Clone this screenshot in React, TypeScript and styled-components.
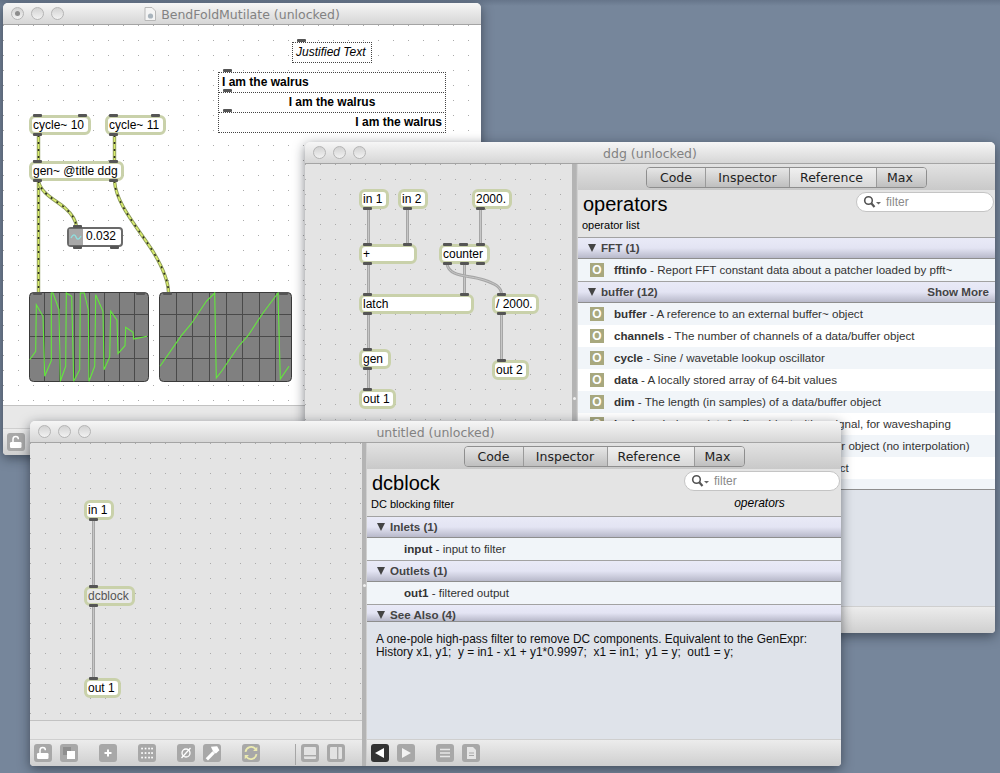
import React from 'react';
import styled, { createGlobalStyle } from 'styled-components';

type Port = number;
type PatchObject = {
  x: number;
  y: number;
  w: number;
  label: string;
  inlets?: Port[];
  outlets?: Port[];
  ghost?: boolean;
};

const GlobalStyle = createGlobalStyle`
  html, body {
    margin: 0;
    padding: 0;
    width: 1000px;
    height: 773px;
    overflow: hidden;
    background: #76869b;
  }
`;

const ARIAL = `"Liberation Sans", Arial, sans-serif`;
const LUCIDA = `"DejaVu Sans", Verdana, sans-serif`;

const Desktop = styled.div`
  position: relative;
  width: 1000px;
  height: 773px;
  overflow: hidden;
  background: linear-gradient(180deg, #66758a 0, #76869b 6px, #76869b 100%);
  font-family: ${ARIAL};
`;

const Window = styled.section<{ $x: number; $y: number; $w: number; $h: number }>`
  position: absolute;
  left: ${(p) => p.$x}px;
  top: ${(p) => p.$y}px;
  width: ${(p) => p.$w}px;
  height: ${(p) => p.$h}px;
  display: flex;
  flex-direction: column;
  border-radius: 5px 5px 4px 4px;
  overflow: hidden;
  box-shadow: 0 3px 12px rgba(20, 25, 35, 0.55);
  background: #e8e8e8;
`;

const TitleBar = styled.header`
  position: relative;
  flex: none;
  height: 22px;
  box-sizing: border-box;
  display: flex;
  align-items: center;
  justify-content: center;
  gap: 5px;
  background: linear-gradient(180deg, #f6f6f6, #d6d6d6);
  border-bottom: 1px solid #a4a4a4;
`;

const TitleText = styled.span`
  padding-top: 1px;
  font: 12.5px ${LUCIDA};
  color: #828282;
`;

const Lights = styled.div`
  position: absolute;
  left: 8px;
  top: 4px;
  display: flex;
  gap: 7px;
`;

const Light = styled.i<{ $dot?: boolean }>`
  position: relative;
  display: block;
  width: 13px;
  height: 13px;
  box-sizing: border-box;
  border-radius: 50%;
  border: 1px solid #b4b4b4;
  background: linear-gradient(180deg, #d2d2d2, #f2f2f2);
  &::after {
    content: '';
    display: ${(p) => (p.$dot ? 'block' : 'none')};
    position: absolute;
    left: 3px;
    top: 3px;
    width: 5px;
    height: 5px;
    border-radius: 50%;
    background: #8c8c8c;
  }
`;

const Body = styled.div`
  flex: 1;
  min-height: 0;
  display: flex;
`;

const PatcherColumn = styled.div<{ $w?: number }>`
  flex: ${(p) => (p.$w ? `none` : 1)};
  width: ${(p) => (p.$w ? `${p.$w}px` : 'auto')};
  display: flex;
  flex-direction: column;
  min-height: 0;
`;

const Canvas = styled.div<{ $bg: string }>`
  position: relative;
  flex: 1;
  min-height: 0;
  overflow: hidden;
  background-color: ${(p) => p.$bg};
  background-image: radial-gradient(circle at 0.5px 0.5px, #aaa 0.45px, transparent 0.75px);
  background-size: 15px 15px;
`;

const CordLayer = styled.svg`
  position: absolute;
  left: 0;
  top: 0;
  width: 100%;
  height: 100%;
`;

const ObjectBox = styled.div<{ $x: number; $y: number; $w: number; $ghost?: boolean }>`
  position: absolute;
  left: ${(p) => p.$x}px;
  top: ${(p) => p.$y}px;
  width: ${(p) => p.$w}px;
  height: 20px;
  box-sizing: border-box;
  padding-left: 1px;
  border: 3px solid #c9d1aa;
  border-radius: 6px;
  background: ${(p) => (p.$ghost ? '#e9e9e9' : '#fff')};
  color: ${(p) => (p.$ghost ? '#555' : '#000')};
  font: 12px/14px ${ARIAL};
  white-space: nowrap;
`;

const PortBar = styled.b<{ $x: number; $bottom?: boolean }>`
  position: absolute;
  left: ${(p) => p.$x - 3}px;
  ${(p) => (p.$bottom ? 'bottom: -4px;' : 'top: -4px;')}
  width: 9px;
  height: 3px;
  border-radius: 1px;
  background: #555;
`;

const NumberBox = styled.div<{ $x: number; $y: number }>`
  position: absolute;
  left: ${(p) => p.$x}px;
  top: ${(p) => p.$y}px;
  width: 56px;
  height: 20px;
  box-sizing: border-box;
  display: flex;
  border: 2px solid #6a6a6a;
  border-radius: 4px;
  background: #fff;
  font: 12px/15px ${ARIAL};
`;

const NumberArrow = styled.span`
  flex: none;
  width: 14px;
  margin-right: 3px;
  background: #a8a8a8;
  color: #8fdede;
  display: flex;
  align-items: center;
  justify-content: center;
`;

const Comment = styled.div<{ $x: number; $y: number; $w: number; $align?: string; $italic?: boolean }>`
  position: absolute;
  left: ${(p) => p.$x}px;
  top: ${(p) => p.$y}px;
  width: ${(p) => p.$w}px;
  height: 21px;
  box-sizing: border-box;
  padding: 0 3px;
  border: 1px dotted #444;
  font: ${(p) => (p.$italic ? 'italic 12px/19px' : 'bold 12px/19px')} ${ARIAL};
  text-align: ${(p) => p.$align || 'left'};
  background: #fff;
  color: #000;
`;

const ScopeFrame = styled.svg<{ $x: number; $y: number; $w: number }>`
  position: absolute;
  left: ${(p) => p.$x}px;
  top: ${(p) => p.$y}px;
  width: ${(p) => p.$w}px;
  height: 90px;
`;

const Strip = styled.div<{ $h: number }>`
  flex: none;
  height: ${(p) => p.$h}px;
  box-sizing: border-box;
  border-top: 1px solid #c2c2c2;
  background: #e8e8e8;
`;

const Toolbar = styled.div`
  flex: none;
  height: 27px;
  box-sizing: border-box;
  padding: 4px 0 0 4px;
  display: flex;
  align-items: flex-start;
  border-top: 1px solid #cfcfcf;
  background: linear-gradient(180deg, #ececec, #cfcfcf);
`;

const ToolButton = styled.span<{ $gap?: number; $dark?: boolean }>`
  flex: none;
  width: 18px;
  height: 18px;
  margin-left: ${(p) => p.$gap ?? 0}px;
  border-radius: 3px;
  background: ${(p) => (p.$dark ? '#333' : '#a8a8a8')};
  display: flex;
  align-items: center;
  justify-content: center;
`;

const ToolDivider = styled.i<{ $gap: number }>`
  flex: none;
  width: 1px;
  height: 21px;
  margin: 0 5px 0 ${(p) => p.$gap}px;
  background: #a6a6a6;
`;

const Splitter = styled.div<{ $w: number; $dot: number }>`
  position: relative;
  flex: none;
  width: ${(p) => p.$w}px;
  background: linear-gradient(90deg, #b4b4b4 0, #b4b4b4 70%, #dcdcdc 100%);
  &::after {
    content: '';
    position: absolute;
    left: 1px;
    top: ${(p) => p.$dot}px;
    width: 3px;
    height: 3px;
    border-radius: 50%;
    background: #f0f0f0;
  }
`;

const Sidebar = styled.div`
  flex: 1;
  min-width: 0;
  display: flex;
  flex-direction: column;
`;

const TabBar = styled.nav`
  flex: none;
  height: 26px;
  padding-top: 3px;
  box-sizing: border-box;
  display: flex;
  justify-content: center;
  align-items: flex-start;
  background: linear-gradient(180deg, #e2e2e2, #c9c9c9);
`;

const TabGroup = styled.div`
  display: flex;
  height: 21px;
  box-sizing: border-box;
  border: 1px solid #8e8e8e;
  border-radius: 4px;
  overflow: hidden;
`;

const Tab = styled.span<{ $w: number; $active?: boolean; $nudge?: number }>`
  box-sizing: border-box;
  width: ${(p) => p.$w}px;
  padding-right: ${(p) => p.$nudge ?? 0}px;
  text-align: center;
  font: 12.5px/19px ${LUCIDA};
  color: #222;
  border-left: 1px solid #9a9a9a;
  background: ${(p) =>
    p.$active ? 'linear-gradient(180deg, #f0f0f0, #d8d8d8)' : 'linear-gradient(180deg, #e6e6e6, #bfbfbf)'};
  &:first-child {
    border-left: 0;
  }
`;

const DocHeader = styled.div`
  flex: none;
  height: 47px;
  box-sizing: border-box;
  background: #e4e4e4;
  color: #000;
`;

const HeadRow = styled.div`
  display: flex;
  justify-content: space-between;
  align-items: flex-start;
  padding: 2px 1px 0 5px;
`;

const DocTitle = styled.h1`
  margin: 0;
  font: normal 20px/24px ${ARIAL};
`;

const FilterField = styled.div<{ $w: number }>`
  width: ${(p) => p.$w}px;
  height: 20px;
  box-sizing: border-box;
  display: flex;
  align-items: center;
  gap: 4px;
  padding-left: 6px;
  border: 1px solid #c4c4c4;
  border-radius: 10px;
  background: #fff;
  font: 12px ${ARIAL};
  color: #8a8a8a;
`;

const SubRow = styled.div`
  display: flex;
  padding: 2px 0 0 4px;
  font-size: 11px;
  line-height: 14px;
`;

const Category = styled.span<{ $x: number }>`
  margin-left: ${(p) => p.$x}px;
  font: italic 12px/12px ${ARIAL};
`;

const Section = styled.div<{ $h?: number }>`
  flex: none;
  height: ${(p) => p.$h ?? 22}px;
  box-sizing: border-box;
  display: flex;
  align-items: flex-start;
  padding: 3px 6px 0 10px;
  overflow: hidden;
  border-top: 1px solid #a2a2a2;
  border-bottom: 1px solid #8e8e8e;
  background: linear-gradient(180deg, #e9eaf7 0, #e3e4f3 50%, #b8b9ca 100%);
  color: #444;
  font: bold 11.6px/14px ${ARIAL};
`;

const Caret = styled.span`
  width: 0;
  height: 0;
  margin: 3px 5px 0 0;
  border-left: 4.5px solid transparent;
  border-right: 4.5px solid transparent;
  border-top: 8px solid #444;
`;

const ShowMore = styled.span`
  margin-left: auto;
`;

const Row = styled.div<{ $odd?: boolean; $h?: number; $indent?: boolean }>`
  flex: none;
  height: ${(p) => p.$h ?? 22}px;
  box-sizing: border-box;
  display: flex;
  align-items: center;
  overflow: hidden;
  padding-left: ${(p) => (p.$indent ? 37 : 12)}px;
  background: ${(p) => (p.$odd ? '#fff' : '#f1f5f9')};
  color: #333;
  font: 11.6px/14px ${ARIAL};
  white-space: nowrap;
  strong {
    color: #333;
  }
`;

const OpBadge = styled.span`
  flex: none;
  width: 14px;
  height: 14px;
  margin-right: 10px;
  background: #a8a87e;
  color: #fff;
  text-align: center;
  font: bold 12px/14px ${ARIAL};
`;

const ListEnd = styled.div`
  flex: none;
  height: 1px;
  background: #8e8e8e;
`;

const Blank = styled.div`
  flex: 1;
  min-height: 0;
  background: #dfe3ea;
`;

const Description = styled.p`
  flex: 1;
  min-height: 0;
  margin: 0;
  padding: 11px 8px 0 9px;
  background: #dfe3ea;
  color: #111;
  font: 11.9px/13px ${ARIAL};
`;

const DocIcon = styled.svg`
  flex: none;
  width: 12px;
  height: 14px;
`;

/* patcher contents, all given in page coordinates */

const bendObjects: PatchObject[] = [
  { x: 29, y: 115, w: 62, label: 'cycle~ 10', inlets: [4, 49], outlets: [4] },
  { x: 105, y: 115, w: 61, label: 'cycle~ 11', inlets: [4, 46], outlets: [4] },
  { x: 29, y: 161, w: 95, label: 'gen~ @title ddg', inlets: [4, 80], outlets: [4, 80] },
];

const ddgObjects: PatchObject[] = [
  { x: 359, y: 189, w: 30, label: 'in 1', outlets: [4] },
  { x: 398, y: 189, w: 30, label: 'in 2', outlets: [5] },
  { x: 472, y: 189, w: 40, label: '2000.', outlets: [4] },
  { x: 359, y: 244, w: 58, label: '+', inlets: [4, 44], outlets: [4] },
  { x: 439, y: 244, w: 51, label: 'counter', inlets: [4, 20, 37], outlets: [4, 21, 37] },
  { x: 359, y: 294, w: 115, label: 'latch', inlets: [4, 101], outlets: [4] },
  { x: 492, y: 294, w: 47, label: '/ 2000.', inlets: [5], outlets: [5] },
  { x: 359, y: 349, w: 32, label: 'gen', inlets: [4], outlets: [4] },
  { x: 492, y: 360, w: 37, label: 'out 2', inlets: [5] },
  { x: 359, y: 389, w: 37, label: 'out 1', inlets: [4] },
];

const untitledObjects: PatchObject[] = [
  { x: 84, y: 500, w: 30, label: 'in 1', outlets: [5] },
  { x: 84, y: 586, w: 51, label: 'dcblock', inlets: [5], outlets: [5], ghost: true },
  { x: 84, y: 678, w: 37, label: 'out 1', inlets: [5] },
];

const bendCords = [
  'M38.5 135V161',
  'M114.5 135V161',
  'M38.5 181V292',
  'M38.5 181C41 194 56 200 65 208C73 215 76 221 76.5 227',
  'M114.5 181C116 204 138 228 152 250C162 266 168 280 168.5 292',
];

const ddgCords = [
  'M368.5 208V244',
  'M407.5 208V244',
  'M480.5 208V244',
  'M368.5 264V294',
  'M464.5 264V294',
  'M447 264C449 277 468 275 484 280C496 284 501 287 501.5 294',
  'M368.5 314V349',
  'M501.5 314V360',
  'M368.5 369V389',
];

const untitledCords = ['M93.5 520V586', 'M93.5 606V678'];

/* traced from the reference at 3x, so divided down when drawn */
const scopeA = [
  [90, 330], [108, 305], [110, 165], [130, 200], [135, 380], [155, 333], [155, 130], [160, 130],
  [178, 180], [182, 395], [198, 350], [200, 130], [216, 140], [222, 395], [240, 360], [242, 130],
  [254, 130], [266, 180], [268, 395], [285, 350], [288, 135], [310, 185], [313, 360], [330, 322],
  [333, 185], [352, 212], [355, 312], [376, 288], [378, 233], [400, 248], [402, 268], [442, 260],
];
const scopeB = [
  [481, 350], [545, 258], [575, 222], [620, 155], [645, 130], [650, 385], [668, 362], [715, 292],
  [745, 258], [790, 190], [835, 130], [842, 388], [868, 350],
];

const toPoints = (pts: number[][], left: number) =>
  pts.map(([x, y]) => `${((x - left) / 3).toFixed(1)},${((y - 127) / 3).toFixed(1)}`).join(' ');

const Scope: React.FC<{ x: number; y: number; w: number; points: string }> = ({ x, y, w, points }) => {
  const cols = Array.from({ length: 7 }, (_, i) => Math.round((i + 1) * (w / 8)) + 0.5);
  const rows = [22.5, 44.5, 66.5];
  return (
    <ScopeFrame $x={x} $y={y} $w={w} viewBox={`0 0 ${w} 90`}>
      <rect x="0.5" y="0.5" width={w - 1} height="89" rx="4" fill="#808080" stroke="#3a3a3a" />
      {cols.map((c) => (
        <line key={c} x1={c} x2={c} y1="1" y2="89" stroke="#4a4a4a" />
      ))}
      {rows.map((r) => (
        <line key={r} y1={r} y2={r} x1="1" x2={w - 1} stroke="#4a4a4a" />
      ))}
      <polyline points={points} fill="none" stroke="#63e83c" strokeWidth="1.1" />
      <rect x="4" y="0" width="9" height="3" rx="1" fill="#555" />
      <rect x={w - 13} y="0" width="9" height="3" rx="1" fill="#555" />
    </ScopeFrame>
  );
};

const Cords: React.FC<{ ox: number; oy: number; paths: string[]; signal?: boolean }> = ({
  ox,
  oy,
  paths,
  signal,
}) => (
  <CordLayer>
    <g transform={`translate(${-ox} ${-oy})`} fill="none">
      {paths.map((d) =>
        signal ? (
          <g key={d}>
            <path d={d} stroke="#8d9a5c" strokeWidth="3.4" />
            <path d={d} stroke="#d8ec6c" strokeWidth="1.6" />
            <path d={d} stroke="#2c2f1e" strokeWidth="1.6" strokeDasharray="2 5" />
          </g>
        ) : (
          <g key={d}>
            <path d={d} stroke="#a6a6a6" strokeWidth="3" />
            <path d={d} stroke="#c6c6c6" strokeWidth="1" />
          </g>
        ),
      )}
    </g>
  </CordLayer>
);

const Objects: React.FC<{ ox: number; oy: number; items: PatchObject[] }> = ({ ox, oy, items }) => (
  <>
    {items.map((o) => (
      <ObjectBox key={o.label + o.x} $x={o.x - ox} $y={o.y - oy} $w={o.w} $ghost={o.ghost}>
        {o.label}
        {o.inlets?.map((p) => <PortBar key={`i${p}`} $x={p} />)}
        {o.outlets?.map((p) => <PortBar key={`o${p}`} $x={p} $bottom />)}
      </ObjectBox>
    ))}
  </>
);

const Svg: React.FC<{ children: React.ReactNode; size?: number }> = ({ children, size = 14 }) => (
  <svg width={size} height={size} viewBox="0 0 14 14">
    {children}
  </svg>
);

const LockIcon = () => (
  <Svg>
    <path d="M4 7V4.2C4 2.6 5.2 1.5 6.7 1.5S9.4 2.6 9.4 4.2" fill="none" stroke="#fff" strokeWidth="1.5" />
    <rect x="1" y="7" width="11.5" height="6" rx="1.2" fill="#fff" />
  </Svg>
);
const LayersIcon = () => (
  <Svg>
    <rect x="1" y="1" width="8" height="8" fill="#8e8e8e" />
    <rect x="5" y="5" width="8" height="8" fill="#fff" />
  </Svg>
);
const PlusIcon = () => (
  <Svg>
    <path d="M7 3.5V10.5M3.5 7H10.5" stroke="#fff" strokeWidth="2" />
  </Svg>
);
const GridIcon = () => (
  <Svg>
    {[2, 5.5, 9, 12].flatMap((x) =>
      [2.5, 7, 11.5].map((y) => <rect key={`${x}-${y}`} x={x - 0.8} y={y - 0.8} width="1.7" height="1.7" fill="#fff" />),
    )}
  </Svg>
);
const NullIcon = () => (
  <Svg>
    <circle cx="7" cy="7" r="4" fill="none" stroke="#fff" strokeWidth="1.3" />
    <path d="M2.5 12L11.5 2" stroke="#fff" strokeWidth="1.3" />
  </Svg>
);
const HammerIcon = () => (
  <Svg size={16}>
    <path d="M6 1.5L11.5 1L13.5 4.5L10.5 7.5L8.5 6.5Z" fill="#fff" />
    <path d="M7.5 5.5L9.5 7.5L3.5 13.5L1.5 11.5Z" fill="#fff" />
  </Svg>
);
const SyncIcon = () => (
  <Svg size={16}>
    <path d="M2.2 6A5 5 0 0 1 11 3.5" fill="none" stroke="#ecebb0" strokeWidth="1.6" />
    <path d="M11.8 8A5 5 0 0 1 3 10.5" fill="none" stroke="#ecebb0" strokeWidth="1.6" />
    <path d="M12.5 1.5V5.2H8.8ZM1.5 12.5V8.8H5.2Z" fill="#ecebb0" />
  </Svg>
);
const BottomPaneIcon = () => (
  <Svg>
    <rect x="1" y="1" width="12" height="12" rx="1" fill="#e2e2e2" />
    <rect x="1" y="9" width="12" height="1.4" fill="#a8a8a8" />
  </Svg>
);
const SidePaneIcon = () => (
  <Svg>
    <rect x="1" y="1" width="12" height="12" rx="1" fill="#e2e2e2" />
    <rect x="8" y="1" width="1.4" height="12" fill="#a8a8a8" />
  </Svg>
);
const TriangleIcon: React.FC<{ right?: boolean }> = ({ right }) => (
  <Svg>
    <path d={right ? 'M3 2L12 7L3 12Z' : 'M11 2L2 7L11 12Z'} fill="#fff" opacity={right ? 0.85 : 1} />
  </Svg>
);
const ListIcon = () => (
  <Svg>
    <path d="M2 3.5H12M2 7H12M2 10.5H12" stroke="#e6e6e6" strokeWidth="1.5" />
  </Svg>
);
const PageIcon = () => (
  <Svg>
    <path d="M3 1H9L12 4V13H3Z" fill="#e6e6e6" />
    <path d="M5 7H10M5 9.5H10" stroke="#a8a8a8" />
  </Svg>
);
const SearchIcon = () => (
  <svg width="19" height="14" viewBox="0 0 19 14">
    <circle cx="5.5" cy="5.5" r="3.8" fill="none" stroke="#555" strokeWidth="1.6" />
    <path d="M8.3 8.3L11.5 12" stroke="#555" strokeWidth="2.2" />
    <path d="M13 7H18L15.5 9.5Z" fill="#666" />
  </svg>
);

const TrafficLights: React.FC<{ dot?: boolean }> = ({ dot }) => (
  <Lights>
    <Light $dot={dot} />
    <Light />
    <Light />
  </Lights>
);

const Tabs = () => (
  <TabBar>
    <TabGroup>
      <Tab $w={58}>Code</Tab>
      <Tab $w={84}>Inspector</Tab>
      <Tab $w={87} $nudge={3} $active>
        Reference
      </Tab>
      <Tab $w={50} $nudge={3}>
        Max
      </Tab>
    </TabGroup>
  </TabBar>
);

const Filter: React.FC<{ w: number }> = ({ w }) => (
  <FilterField $w={w}>
    <SearchIcon />
    filter
  </FilterField>
);

const SectionHead: React.FC<{ title: string; h?: number; more?: boolean }> = ({ title, h, more }) => (
  <Section $h={h}>
    <Caret />
    {title}
    {more && <ShowMore>Show More</ShowMore>}
  </Section>
);

const operators = [
  ['buffer', 'A reference to an external buffer~ object'],
  ['channels', 'The number of channels of a data/buffer object'],
  ['cycle', 'Sine / wavetable lookup oscillator'],
  ['data', 'A locally stored array of 64-bit values'],
  ['dim', 'The length (in samples) of a data/buffer object'],
  ['lookup', 'Index a data/buffer object with a signal, for waveshaping'],
  ['peek', 'Read stored values from a data/buffer object (no interpolation)'],
  ['poke', 'Write values into the data/buffer object'],
];

const App: React.FC = () => (
  <Desktop>
    <GlobalStyle />

    <Window $x={3} $y={3} $w={478} $h={452}>
      <TitleBar>
        <DocIcon viewBox="0 0 12 14">
          <path d="M1 0.5H8L11.5 4V13.5H1Z" fill="#f4f4f4" stroke="#b8b8b8" />
          <circle cx="6.5" cy="9" r="2.6" fill="#a9b4bd" />
        </DocIcon>
        <TitleText>BendFoldMutilate (unlocked)</TitleText>
        <TrafficLights dot />
      </TitleBar>
      <PatcherColumn>
        <Canvas $bg="#ffffff">
          <Cords ox={3} oy={25} paths={bendCords} signal />
          <Objects ox={3} oy={25} items={bendObjects} />
          <NumberBox $x={64} $y={202}>
            <NumberArrow>
              <svg width="12" height="8" viewBox="0 0 12 8">
                <path d="M1 5C3 1 5 1 6 4S9 7 11 3" fill="none" stroke="#8fe0e0" strokeWidth="1.4" />
              </svg>
            </NumberArrow>
            0.032
            <PortBar $x={7} />
            <PortBar $x={7} $bottom />
            <PortBar $x={44} $bottom />
          </NumberBox>
          <Comment $x={289} $y={17} $w={80} $italic>
            Justified Text
            <PortBar $x={7} />
          </Comment>
          <Comment $x={215} $y={47} $w={228}>
            I am the walrus
            <PortBar $x={7} />
          </Comment>
          <Comment $x={215} $y={67} $w={228} $align="center">
            I am the walrus
            <PortBar $x={7} />
          </Comment>
          <Comment $x={215} $y={87} $w={228} $align="right">
            I am the walrus
            <PortBar $x={7} />
          </Comment>
          <Scope x={26} y={267} w={120} points={toPoints(scopeA, 88)} />
          <Scope x={156} y={267} w={133} points={toPoints(scopeB, 478)} />
        </Canvas>
        <Strip $h={23} />
        <Toolbar>
          <ToolButton>
            <LockIcon />
          </ToolButton>
        </Toolbar>
      </PatcherColumn>
    </Window>

    <Window $x={305} $y={142} $w={690} $h={491}>
      <TitleBar>
        <TrafficLights />
        <TitleText>ddg (unlocked)</TitleText>
      </TitleBar>
      <Body>
        <PatcherColumn $w={267}>
          <Canvas $bg="#e4e4e4">
            <Cords ox={305} oy={164} paths={ddgCords} />
            <Objects ox={305} oy={164} items={ddgObjects} />
          </Canvas>
          <Strip $h={19} />
          <Toolbar />
        </PatcherColumn>
        <Splitter $w={6} $dot={233} />
        <Sidebar>
          <Tabs />
          <DocHeader>
            <HeadRow>
              <DocTitle>operators</DocTitle>
              <Filter w={138} />
            </HeadRow>
            <SubRow>operator list</SubRow>
          </DocHeader>
          <SectionHead title="FFT (1)" />
          <Row>
            <OpBadge>O</OpBadge>
            <span>
              <strong>fftinfo</strong> - Report FFT constant data about a patcher loaded by pfft~
            </span>
          </Row>
          <SectionHead title="buffer (12)" more />
          {operators.map(([name, text], i) => (
            <Row key={name} $odd={i % 2 === 1}>
              <OpBadge>O</OpBadge>
              <span>
                <strong>{name}</strong> - {text}
              </span>
            </Row>
          ))}
          <Row $h={10} />
          <ListEnd />
          <Blank />
          <Toolbar />
        </Sidebar>
      </Body>
    </Window>

    <Window $x={30} $y={421} $w={811} $h={345}>
      <TitleBar>
        <TrafficLights />
        <TitleText>untitled (unlocked)</TitleText>
      </TitleBar>
      <Body>
        <PatcherColumn $w={332}>
          <Canvas $bg="#e4e4e4">
            <Cords ox={30} oy={443} paths={untitledCords} />
            <Objects ox={30} oy={443} items={untitledObjects} />
          </Canvas>
          <Strip $h={19} />
          <Toolbar>
            <ToolButton>
              <LockIcon />
            </ToolButton>
            <ToolButton $gap={8}>
              <LayersIcon />
            </ToolButton>
            <ToolButton $gap={21}>
              <PlusIcon />
            </ToolButton>
            <ToolButton $gap={21}>
              <GridIcon />
            </ToolButton>
            <ToolButton $gap={21}>
              <NullIcon />
            </ToolButton>
            <ToolButton $gap={8}>
              <HammerIcon />
            </ToolButton>
            <ToolButton $gap={21}>
              <SyncIcon />
            </ToolButton>
            <ToolDivider $gap={35} />
            <ToolButton>
              <BottomPaneIcon />
            </ToolButton>
            <ToolButton $gap={8}>
              <SidePaneIcon />
            </ToolButton>
          </Toolbar>
        </PatcherColumn>
        <Splitter $w={5} $dot={141} />
        <Sidebar>
          <Tabs />
          <DocHeader>
            <HeadRow>
              <DocTitle>dcblock</DocTitle>
              <Filter w={156} />
            </HeadRow>
            <SubRow>
              DC blocking filter
              <Category $x={280}>operators</Category>
            </SubRow>
          </DocHeader>
          <SectionHead title="Inlets (1)" />
          <Row $indent>
            <span>
              <strong>input</strong> - input to filter
            </span>
          </Row>
          <SectionHead title="Outlets (1)" />
          <Row $indent>
            <span>
              <strong>out1</strong> - filtered output
            </span>
          </Row>
          <SectionHead title="See Also (4)" h={18} />
          <Description>
            A one-pole high-pass filter to remove DC components. Equivalent to the GenExpr:
            <br />
            History x1, y1;&nbsp; y = in1 - x1 + y1*0.9997;&nbsp; x1 = in1;&nbsp; y1 = y;&nbsp; out1 = y;
          </Description>
          <Toolbar>
            <ToolButton $dark>
              <TriangleIcon />
            </ToolButton>
            <ToolButton $gap={8}>
              <TriangleIcon right />
            </ToolButton>
            <ToolButton $gap={21}>
              <ListIcon />
            </ToolButton>
            <ToolButton $gap={8}>
              <PageIcon />
            </ToolButton>
          </Toolbar>
        </Sidebar>
      </Body>
    </Window>
  </Desktop>
);

export default App;
